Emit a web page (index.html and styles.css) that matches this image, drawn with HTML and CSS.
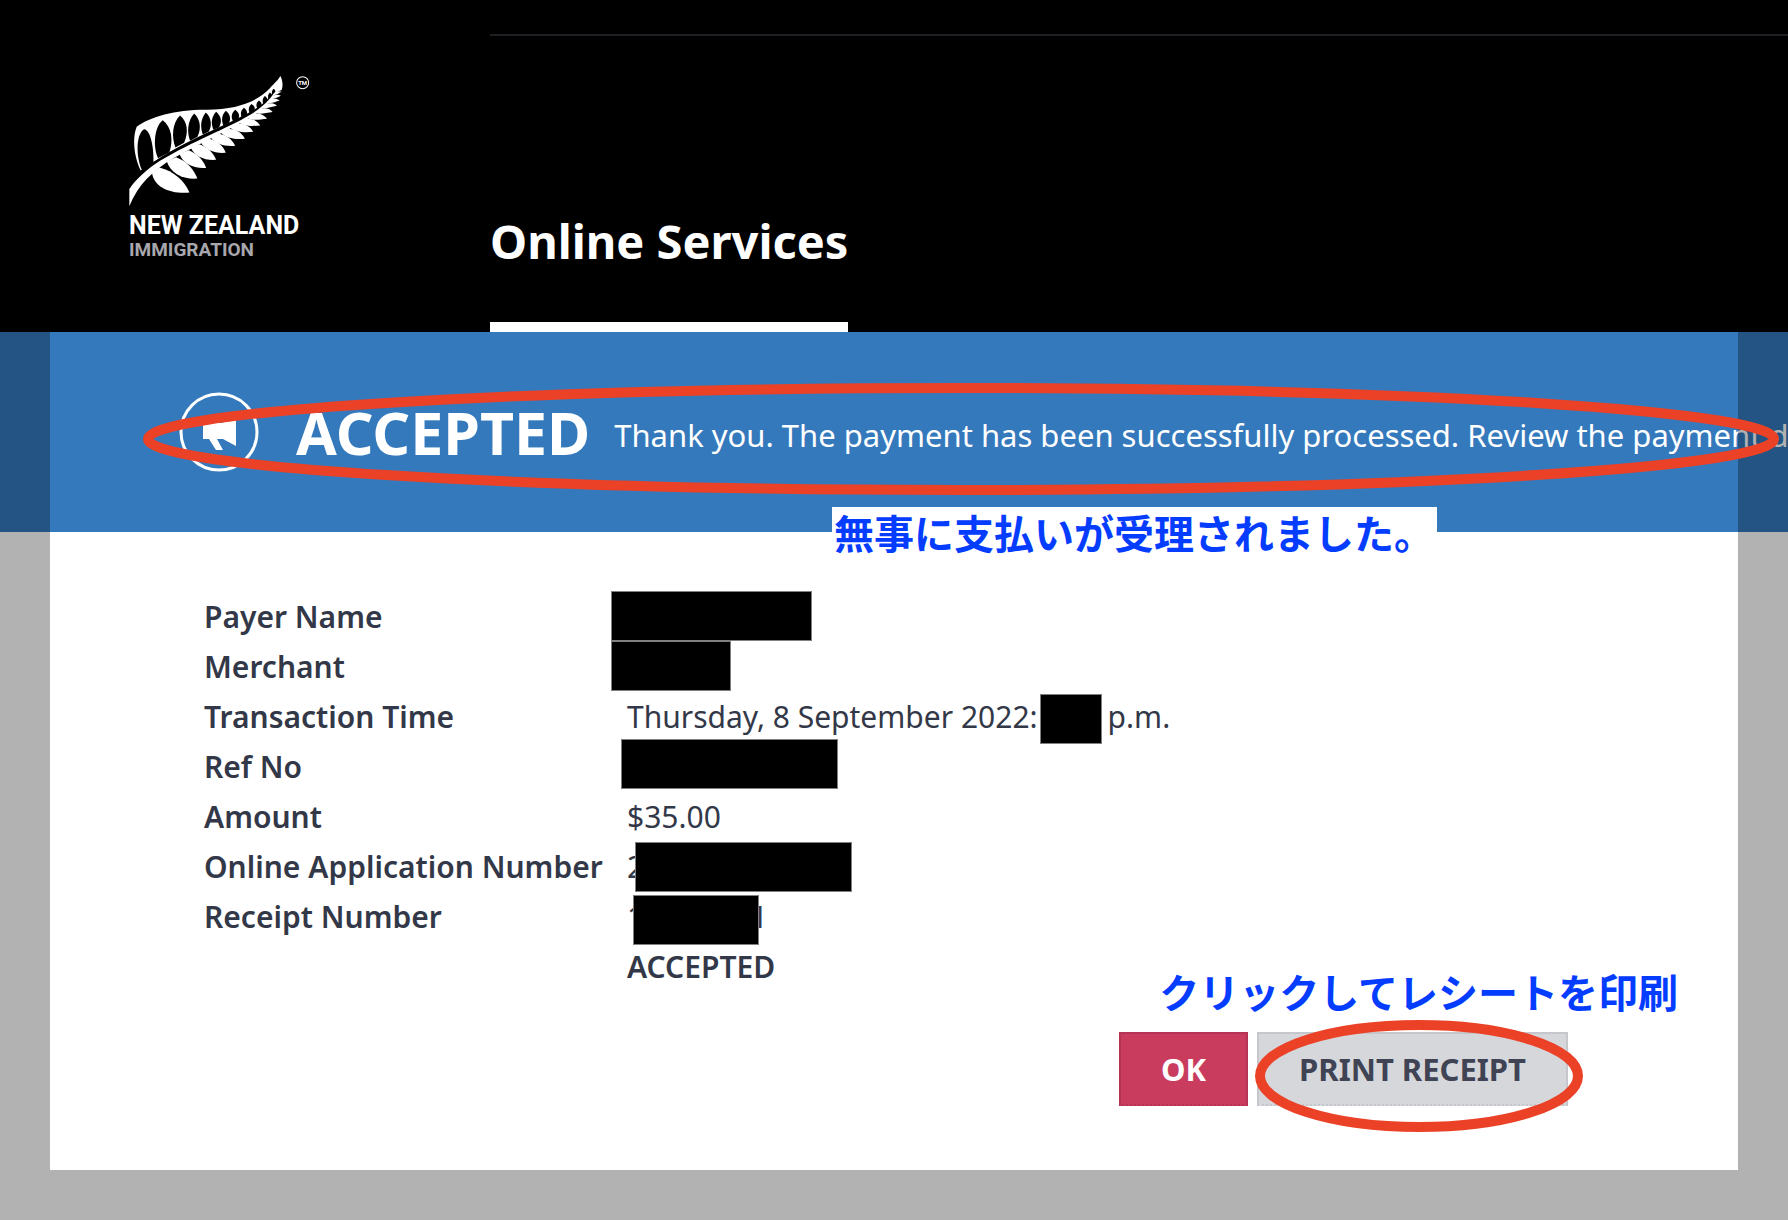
FILE: index.html
```
<!DOCTYPE html>
<html lang="en">
<head>
    <meta charset="UTF-8">
    <meta name="viewport" content="width=device-width, initial-scale=1">
    <title>Online Services - Payment Accepted</title>
    <link rel="stylesheet" href="styles.css">
</head>
<body>
    <header class="site-header">
        <a class="logo" href="#">
            <svg class="fern" viewBox="57 45 545 395" aria-hidden="true">
                <!-- upper frond -->
                <path fill="#fff" d="M92 331C72 290 66 235 80 200C120 170 200 148 290 149C380 148 440 125 478 85C495 68 505 58 510 48C517 58 519 78 514 90L494 98C478 122 455 142 424 158C350 198 250 236 190 270C160 285 140 300 128 307L100 325Z"/>
                <g fill="#000">
                    <path d="M102 207C122 208 132 265 130 310L97 332C80 300 74 225 102 207Z"/>
                    <path d="M158 180C185 200 190 240 178 276L144 294C128 260 132 200 158 180Z"/>
                    <path d="M210 166C232 184 236 215 222 248L196 262C184 232 186 188 210 166Z"/>
                    <path d="M252 160C271 178 274 204 262 230L240 242C230 216 232 182 252 160Z"/>
                    <path d="M287 157C304 173 306 195 296 214L278 223C270 200 271 177 287 157Z"/>
                    <path d="M318 155C334 169 336 186 326 202L310 209C302 190 303 171 318 155Z"/>
                    <path d="M347 152C361 164 363 178 355 190L340 197C333 180 334 166 347 152Z"/>
                    <path d="M375 149C388 159 390 170 382 179L369 185C362 171 363 160 375 149Z"/>
                    <path d="M401 143C412 151 413 161 407 167L395 173C390 162 391 152 401 143Z"/>
                    <path d="M424 132C435 139 436 148 430 154L419 160C413 150 415 140 424 132Z"/>
                    <path d="M446 121C455 127 457 134 451 140L442 145C436 137 438 128 446 121Z"/>
                    <path d="M464 108C472 113 474 121 468 126L460 132C455 124 457 114 464 108Z"/>
                    <path d="M479 97C486 101 487 108 483 112L476 117C471 110 473 102 479 97Z"/>
                    <path d="M490 86C496 89 497 96 493 99L487 104C483 98 485 90 490 86Z"/>
                </g>
                <path fill="none" stroke="#000" stroke-width="6" d="M95 334C150 291 220 254 290 221C350 194 410 168 446 143C468 128 482 113 490 99"/>
                <!-- stem -->
                <path fill="#fff" d="M58 438V386C80 355 110 328 150 302C250 242 350 206 420 164C455 142 478 120 490 100L495 99C482 124 460 147 425 169C350 213 260 254 190 294C130 330 84 372 58 438Z"/>
                <!-- lower leaves -->
                <g fill="#fff">
                    <path d="M126 338C132 380 180 402 238 397C222 360 192 334 148 322Z"/>
                    <path d="M170 303C182 340 218 358 262 355C248 322 230 304 198 291Z"/>
                    <path d="M208 281C218 310 250 326 288 323C278 296 262 282 236 270Z"/>
                    <path d="M242 262C252 288 284 302 318 299C308 274 292 262 268 252Z"/>
                    <path d="M272 247C284 268 314 281 347 278C338 256 322 243 298 236Z"/>
                    <path d="M302 232C314 250 342 260 375 257C364 236 350 226 327 221Z"/>
                    <path d="M332 217C344 232 372 239 404 236C394 217 380 209 357 206Z"/>
                    <path d="M360 202C372 215 400 218 429 215C418 197 406 192 384 190Z"/>
                    <path d="M387 187C398 198 424 199 450 196C440 181 428 176 408 175Z"/>
                    <path d="M412 173C422 182 446 179 470 176C460 163 450 160 431 160Z"/>
                    <path d="M436 158C445 164 468 159 487 156C478 145 470 144 452 145Z"/>
                    <path d="M455 143C463 147 484 140 500 137C492 129 484 129 469 130Z"/>
                    <path d="M470 129C478 132 494 125 508 121C500 115 494 115 482 117Z"/>
                    <path d="M482 117C488 119 500 112 512 107C504 103 498 103 489 106Z"/>
                    <path d="M490 105C496 106 506 99 514 95C506 92 502 93 494 96Z"/>
                </g>
                <circle cx="577" cy="68" r="18" fill="none" stroke="#fff" stroke-width="3"/>
                <text class="tm" x="577" y="74" text-anchor="middle">TM</text>
            </svg>
            <span class="logo-name">NEW ZEALAND</span>
            <span class="logo-dept">IMMIGRATION</span>
        </a>
        <nav class="main-nav">
            <a class="nav-link active" href="#">Online Services</a>
        </nav>
    </header>

    <main class="page">
        <section class="banner">
            <svg class="banner-icon" viewBox="0 0 80 80" aria-hidden="true">
                <circle cx="40" cy="40" r="38" fill="none" stroke="#fff" stroke-width="3"/>
                <path fill="#fff" d="M24 31H43L57 23V54L44 47H38L44 58H37L30 47H24Z"/>
            </svg>
            <h1 class="banner-title">ACCEPTED</h1>
            <p class="banner-text">Thank you. The payment has been successfully processed. Review the payment d</p>
            <svg class="mark mark-banner" aria-hidden="true"><ellipse cx="50%" cy="50%"/></svg>
            <p class="note note-banner" lang="ja">無事に支払いが受理されました。</p>
        </section>

        <section class="receipt">
            <table class="details">
                <tr>
                    <th scope="row">Payer Name</th>
                    <td><span class="redact r-payer"></span></td>
                </tr>
                <tr>
                    <th scope="row">Merchant</th>
                    <td><span class="redact r-merchant"></span></td>
                </tr>
                <tr>
                    <th scope="row">Transaction Time</th>
                    <td><span class="time">Thursday, 8 September 2022: <span>p.m.</span></span><span class="redact r-time"></span></td>
                </tr>
                <tr>
                    <th scope="row">Ref No</th>
                    <td><span class="redact r-ref"></span></td>
                </tr>
                <tr>
                    <th scope="row">Amount</th>
                    <td>$35.00</td>
                </tr>
                <tr>
                    <th scope="row">Online Application Number</th>
                    <td>2<span class="redact r-app"></span></td>
                </tr>
                <tr>
                    <th scope="row">Receipt Number</th>
                    <td><span class="receipt-no"><span>1</span><span>1</span></span><span class="redact r-receipt"></span></td>
                </tr>
                <tr>
                    <th></th>
                    <td class="status">ACCEPTED</td>
                </tr>
            </table>

            <div class="actions">
                <p class="note note-print" lang="ja">クリックしてレシートを印刷</p>
                <button class="btn btn-ok" type="button">OK</button>
                <div class="print-wrap">
                    <button class="btn btn-print" type="button">PRINT RECEIPT</button>
                    <svg class="mark mark-print" aria-hidden="true"><ellipse cx="50%" cy="50%"/></svg>
                </div>
            </div>
        </section>
    </main>
</body>
</html>
```
FILE: styles.css
```
* {
    box-sizing: border-box;
}

body {
    margin: 0;
    font-family: "Noto Sans", "Open Sans", sans-serif;
    font-size: 30px;
    line-height: 50px;
    color: #333848;
    background: #fff;
    overflow-x: hidden;
}

h1, p {
    margin: 0;
}

/* header */
.site-header {
    display: grid;
    grid-template-columns: 490px 1fr;
    min-height: 332px;
    background: #000;
}

.logo {
    display: flex;
    flex-direction: column;
    align-items: flex-start;
    padding: 75px 0 0 129px;
    font-family: Roboto, sans-serif;
    color: #fff;
    text-decoration: none;
}

.fern {
    width: 182px;
    height: 132px;
}

.tm {
    font-family: Roboto, sans-serif;
    font-size: 18px;
    font-weight: 700;
    fill: #fff;
}

.logo-name {
    margin-top: 5px;
    font-size: 25px;
    font-weight: 700;
    line-height: 28px;
}

.logo-dept {
    font-size: 19px;
    font-weight: 700;
    line-height: 20px;
    color: #a7a7ad;
}

.main-nav {
    display: flex;
    align-items: flex-end;
    margin-top: 34px;
    border-top: 2px solid #1f1f23;
}

.nav-link {
    padding-bottom: 54px;
    font-size: 47px;
    font-weight: 700;
    line-height: 54px;
    color: #fff;
    text-decoration: none;
}

.nav-link.active {
    border-bottom: 10px solid #fff;
}

/* page body, dimmed round the edge */
.page {
    position: relative;
    min-height: 888px;
    padding-bottom: 50px;
}

.page::before {
    content: "";
    position: absolute;
    inset: 0;
    z-index: 1;
    border: solid rgba(0, 0, 0, 0.3);
    border-width: 0 50px 50px;
    pointer-events: none;
}

.banner {
    position: relative;
    display: flex;
    align-items: center;
    height: 200px;
    padding: 0 0 0 179px;
    background: #3479bc;
    color: #fff;
    white-space: nowrap;
}

.banner-icon {
    flex: none;
    width: 80px;
    height: 80px;
    margin-right: 37px;
}

.banner-title {
    margin-right: 24px;
    font-size: 59px;
    font-weight: 700;
}

.banner-text {
    padding-top: 5px;
    font-size: 31px;
}

/* hand-drawn style annotations */
.mark {
    position: absolute;
    z-index: 2;
    pointer-events: none;
}

.mark ellipse {
    rx: calc(50% - 5px);
    ry: calc(50% - 5px);
    fill: none;
    stroke: #eb4127;
    stroke-width: 10px;
}

.mark-banner {
    left: 143px;
    top: 51px;
    width: calc(100% - 152px);
    height: 112px;
}

.mark-print {
    left: -2px;
    top: -12px;
    width: 328px;
    height: 112px;
}

.note {
    position: absolute;
    font-family: "Noto Sans CJK JP", sans-serif;
    font-size: 40px;
    font-weight: 700;
    color: #043dff;
    white-space: nowrap;
}

.note-banner {
    left: 832px;
    top: 175px;
    width: 605px;
    padding-left: 2px;
    background: #fff;
}

.note-print {
    right: -110px;
    bottom: 90px;
}

/* receipt */
.receipt {
    padding: 60px 220px 64px 204px;
}

.details {
    border-collapse: collapse;
}

.details th,
.details td {
    height: 50px;
    padding: 0;
    text-align: left;
    white-space: nowrap;
}

.details th {
    width: 423px;
    font-weight: 600;
}

.details td {
    position: relative;
}

.details .status {
    font-weight: 600;
}

.time {
    display: flex;
    gap: 70px;
}

.receipt-no {
    display: flex;
    justify-content: space-between;
    width: 141px;
}

.redact {
    position: absolute;
    top: 0;
    height: 50px;
    background: #000;
    border: 1px solid #808080;
}

.r-payer {
    left: -16px;
    top: -1px;
    width: 201px;
}

.r-merchant {
    left: -16px;
    top: -1px;
    width: 120px;
}

.r-time {
    left: 413px;
    top: 2px;
    width: 62px;
}

.r-ref {
    left: -6px;
    top: -3px;
    width: 217px;
}

.r-app {
    left: 8px;
    width: 217px;
}

.r-receipt {
    left: 6px;
    top: 3px;
    width: 126px;
}

/* buttons */
.actions {
    position: relative;
    display: flex;
    justify-content: flex-end;
    gap: 9px;
    margin-top: 40px;
}

.print-wrap {
    position: relative;
}

.btn {
    height: 74px;
    padding: 0 40px;
    font-family: "Noto Sans", "Open Sans", sans-serif;
    font-size: 31px;
    font-weight: 700;
    cursor: pointer;
}

.btn-ok {
    color: #fff;
    background: #c93c5e;
    border: 2px solid #b53354;
    border-bottom-style: dotted;
}

.btn-print {
    color: #3f4354;
    background: #d6d7db;
    border: 2px solid #c6c7cc;
    border-bottom-style: dotted;
}
```
